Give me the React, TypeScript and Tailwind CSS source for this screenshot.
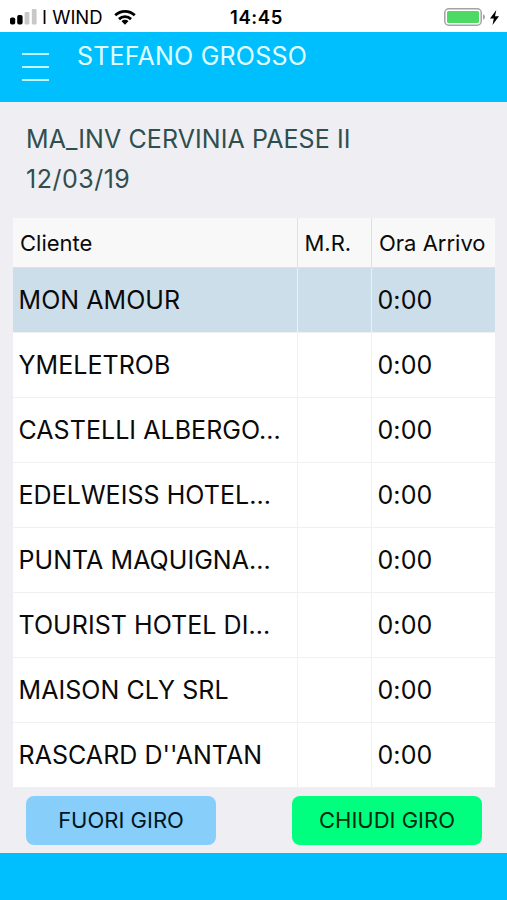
interface Stop {
    client: string;
    mr: string;
    arrival: string;
}

const stops: Stop[] = [
    { client: "MON AMOUR", mr: "", arrival: "0:00" },
    { client: "YMELETROB", mr: "", arrival: "0:00" },
    { client: "CASTELLI ALBERGO...", mr: "", arrival: "0:00" },
    { client: "EDELWEISS HOTEL...", mr: "", arrival: "0:00" },
    { client: "PUNTA MAQUIGNA...", mr: "", arrival: "0:00" },
    { client: "TOURIST HOTEL DI...", mr: "", arrival: "0:00" },
    { client: "MAISON CLY SRL", mr: "", arrival: "0:00" },
    { client: "RASCARD D''ANTAN", mr: "", arrival: "0:00" },
]

function StatusBar() {
    return (
        <div className="flex h-8 shrink-0 items-center justify-between bg-white pt-0.5 pr-2 pl-2.5 text-black">
            <div className="flex w-[180px] items-center">
                {/* signal */}
                <svg width="27" height="18" viewBox="0 0 27 18">
                    <rect x="0" y="9.5" width="5.2" height="7" rx="1.8" fill="#000" />
                    <rect x="7.2" y="7" width="5.4" height="9.5" rx="1.8" fill="#000" />
                    <rect x="14.6" y="4" width="4.8" height="12.5" rx="1" fill="#c8c8c8" />
                    <rect x="21.8" y="1" width="4.8" height="15.5" rx="1" fill="#c8c8c8" />
                </svg>
                <span className="ml-[5px] text-[18.5px] leading-none whitespace-nowrap">I WIND</span>
                {/* wifi */}
                <svg className="ml-[11px]" width="22" height="17" viewBox="0 0 23 17" fill="none" stroke="#000" strokeWidth="2.9">
                    <path d="M1.3 6.2C7 .6 16 .6 21.7 6.2" />
                    <path d="M5.2 10.2c3.6-3.4 9-3.4 12.6 0" />
                    <path d="M11.5 16 7.900 12.400c2-1.900 5.200-1.900 7.200 0z" fill="#000" stroke="none" />
                </svg>
            </div>
            <span className="ml-1 text-[18.5px] leading-none font-semibold tracking-[0.6px]">14:45</span>
            <div className="flex w-[180px] items-center justify-end">
                {/* battery */}
                <svg width="42" height="18" viewBox="0 0 42 18">
                    <rect x="0.8" y="0.8" width="36.4" height="16.4" rx="4" fill="#fff" stroke="#a3a3a3" strokeWidth="1.5" />
                    <rect x="3" y="3" width="32" height="12" rx="1.5" fill="#4cd964" />
                    <path d="M39 6.3c2.6.7 2.6 4.7 0 5.4z" fill="#a3a3a3" />
                </svg>
                <svg className="ml-1" width="9" height="15" viewBox="0 0 9 15">
                    <path d="M6.3 0 0 8.5h3.8L2.5 15 9 6.2H5z" fill="#000" />
                </svg>
            </div>
        </div>
    )
}

export default function App() {
    return (
        <div className="flex h-[900px] w-[507px] flex-col overflow-hidden bg-[#efeef3] font-['Inter',sans-serif]">
            <StatusBar />

            {/* app bar */}
            <header className="flex h-[70px] shrink-0 items-start bg-[#00bfff] pl-[22px] text-[#e0ffff]">
                <button className="mt-[21px] flex w-[27px] flex-col gap-[11px]">
                    <span className="h-0.5 w-full bg-[#bff8ff]"></span>
                    <span className="h-0.5 w-full bg-[#bff8ff]"></span>
                    <span className="h-0.5 w-full bg-[#bff8ff]"></span>
                </button>
                <h1 className="mt-[9px] ml-7 text-[25px] leading-[30px] tracking-[0.22px]">STEFANO GROSSO</h1>
            </header>

            {/* tour info */}
            <div className="h-[116px] shrink-0 pt-[17px] pl-[26px] text-[25px] leading-10 text-[#2f4f4f]">
                <p className="tracking-[0.08px] whitespace-nowrap">MA_INV CERVINIA PAESE II</p>
                <p className="tracking-[0.5px]">12/03/19</p>
            </div>

            <table className="ml-[13px] w-[482px] shrink-0 table-fixed border-separate border-spacing-0 text-left text-[#0a0a0a]">
                <colgroup>
                    <col className="w-[285px]" />
                    <col className="w-[74px]" />
                    <col />
                </colgroup>
                <thead>
                    <tr className="h-[50px] bg-[#f8f8f8] text-[22px] whitespace-nowrap">
                        <th className="border-r border-b border-[#e0e0e0] p-0 pt-0.5 pl-[7px] font-normal">Cliente</th>
                        <th className="border-r border-b border-[#e0e0e0] p-0 pt-0.5 pl-[6.5px] font-normal">M.R.</th>
                        <th className="border-b border-[#e0e0e0] p-0 pt-0.5 pl-[7px] font-normal">Ora Arrivo</th>
                    </tr>
                </thead>
                <tbody>
                    {stops.map((stop, i) =>
                        <tr key={stop.client} className={`h-[65px] text-[25px] whitespace-nowrap ${i === 0 ? "bg-[#cddeeb]" : "bg-white"}`}>
                            <td className="border-r border-b border-[#f0f0f2] p-0 pt-0.5 pl-[5.5px] tracking-[0.05px]">{stop.client}</td>
                            <td className="border-r border-b border-[#f0f0f2] p-0 pt-0.5 pl-[5.5px]">{stop.mr}</td>
                            <td className="border-b border-[#f0f0f2] p-0 pt-0.5 pl-[5.5px] tracking-[0.1px]">{stop.arrival}</td>
                        </tr>
                    )}
                </tbody>
            </table>

            {/* actions */}
            <div className="flex grow items-start justify-between pt-2 pr-[25px] pl-[26px] text-[22px] text-[#04141f]">
                <button className="h-[49px] w-[190px] rounded-lg bg-[#87cefa]">FUORI GIRO</button>
                <button className="h-[49px] w-[190px] rounded-lg bg-[#00ff7f] text-[#002b10]">CHIUDI GIRO</button>
            </div>

            <footer className="h-[47px] shrink-0 bg-[#00bfff]"></footer>
        </div>
    )
}
